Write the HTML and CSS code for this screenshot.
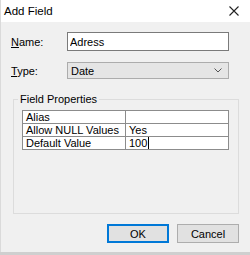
FILE: index.html
```html
<!DOCTYPE html>
<html lang="en">
<head>
  <meta charset="UTF-8" />
  <title>Add Field</title>
  <link rel="stylesheet" href="styles.css">
</head>
<body>
  <div class="window">
    <div class="titlebar">
      <span class="title">Add Field</span>
      <svg class="close" width="10" height="10" viewBox="0 0 10 10">
        <path d="M0.5 0.5 L9.5 9.5 M9.5 0.5 L0.5 9.5" stroke="#222" stroke-width="1.1" fill="none" />
      </svg>
    </div>

    <div class="content">
      <div class="row">
        <label class="lbl" for="name"><u>N</u>ame:</label>
        <input class="field" type="text" id="name" value="Adress" />
      </div>
      <div class="row row-type">
        <label class="lbl"><u>T</u>ype:</label>
        <div class="select">
          <span>Date</span>
          <svg width="8" height="5" viewBox="0 0 8 5">
            <path d="M0.5 0.5 L4 4 L7.5 0.5" stroke="#555" stroke-width="1" fill="none" />
          </svg>
        </div>
      </div>

      <fieldset class="group">
        <legend>Field Properties</legend>
        <table class="props">
          <tr><td class="key">Alias</td><td></td></tr>
          <tr><td class="key">Allow NULL Values</td><td>Yes</td></tr>
          <tr><td class="key">Default Value</td><td><span class="edit">100</span></td></tr>
        </table>
      </fieldset>

      <div class="buttons">
        <button class="btn btn-default">OK</button>
        <button class="btn">Cancel</button>
      </div>
    </div>
  </div>
</body>
</html>
```

FILE: styles.css
```css
* {
  box-sizing: border-box;
  margin: 0;
  padding: 0;
}
html {
  background: #cfcfcf;
}
body {
  width: 250px;
  height: 255px;
  font-family: 'Liberation Sans', Arial, sans-serif;
  font-size: 11px;
  color: #000;
}
.window {
  height: 252px;
  display: flex;
  flex-direction: column;
  border-left: 1px solid #dadada;
  background: #f0f0f0;
}
.titlebar {
  height: 22px;
  background: #fff;
  display: flex;
  align-items: center;
  justify-content: space-between;
  padding: 0 11px 0 3px;
}
.title {
  font-size: 11.5px;
  color: #000;
}
.content {
  flex: 1;
  padding-top: 10px;
}
.row {
  display: flex;
  align-items: center;
  padding-left: 10px;
}
.row-type {
  margin-top: 11px;
}
.lbl {
  width: 56px;
}
.field {
  width: 162px;
  height: 19px;
  border: 1px solid #7a7a7a;
  background: #fff;
  font: inherit;
  padding: 0 2px;
  outline: none;
}
.select {
  width: 162px;
  height: 17px;
  border: 1px solid #acacac;
  background: #e5e5e5;
  display: flex;
  align-items: center;
  justify-content: space-between;
  padding: 0 6px 0 3px;
}
.group {
  margin: 14px 11px 0 12px;
  height: 121px;
  border: 1px solid #dcdcdc;
  padding: 0 4px;
}
.group legend {
  padding: 0 2px;
  line-height: 13px;
}
.props {
  margin: 4px 0 0 4px;
  width: 207px;
  border-collapse: collapse;
  background: #fff;
  table-layout: fixed;
}
.props td {
  border: 1px solid #8c8c8c;
  height: 13px;
  line-height: 12px;
  padding: 0 3px;
  white-space: nowrap;
  vertical-align: bottom;
}
.props td.key {
  width: 103px;
}
.edit {
  border-right: 1px solid #000;
  padding-right: 1px;
}
.buttons {
  display: flex;
  justify-content: flex-end;
  gap: 8px;
  margin-top: 10px;
  padding-right: 11px;
}
.btn {
  width: 62px;
  height: 19px;
  border: 1px solid #adadad;
  background: #e1e1e1;
  font: inherit;
  color: #000;
}
.btn-default {
  border: 2px solid #0078d7;
}
```
